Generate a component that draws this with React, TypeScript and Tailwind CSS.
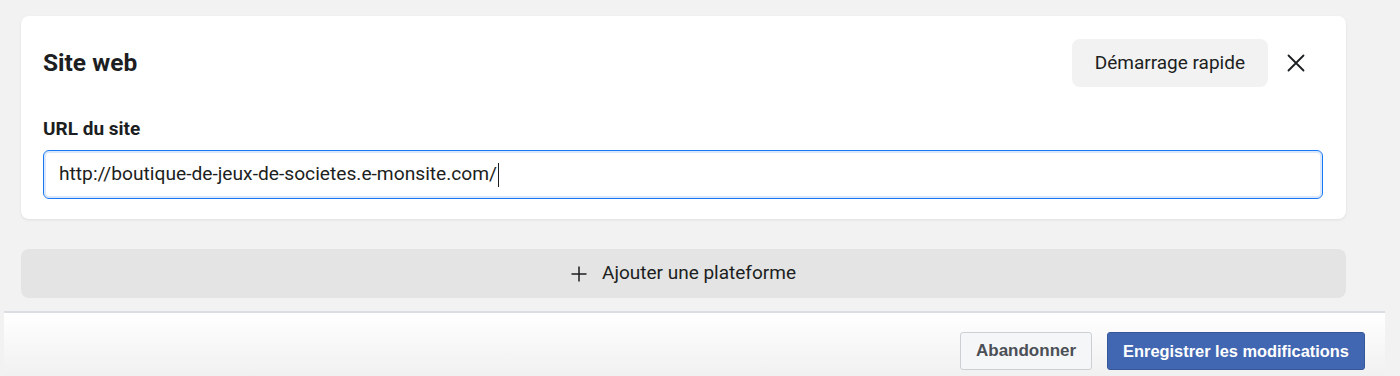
const App = () => {
  return (
    <div className="h-[376px] w-[1400px] overflow-hidden bg-[#f2f2f2] font-['Roboto',sans-serif] text-[#1c1e21]">
      <div className="pt-4">
        {/* Site web card */}
        <div className="ml-[21px] w-[1325px] rounded-lg bg-white pt-[23px] pb-[20px] pl-[22px] pr-[23px] shadow-[0_1px_3px_rgba(0,0,0,0.08)]">
          <div className="flex h-12 items-center justify-between">
            <h2 className="text-[24.5px] font-bold leading-none text-[#1c1e21]">Site web</h2>
            <div className="flex items-center">
              <button className="h-12 rounded-lg bg-[#f2f2f2] px-[23px] text-[19px] text-[#1c1e21]">
                Démarrage rapide
              </button>
              <button className="ml-2 mr-[7px] flex h-10 w-10 items-center justify-center text-[#1c1e21]">
                <svg width="18" height="18" viewBox="0 0 18 18" fill="none" stroke="currentColor" strokeWidth="1.8" strokeLinecap="round">
                  <path d="M1.5 1.5 L16.5 16.5 M16.5 1.5 L1.5 16.5" />
                </svg>
              </button>
            </div>
          </div>
          <label className="mt-[30px] block text-[19px] font-bold leading-[23px] text-[#1c1e21]">URL du site</label>
          <div className="mt-[10px] flex h-[49px] items-center rounded-md border border-[#1877f2] bg-white pl-[15px] shadow-[inset_0_0_0_2px_#dbe8fc]">
            <span className="text-[19.2px] text-[#1c1e21]">http://boutique-de-jeux-de-societes.e-monsite.com/</span>
            <span className="ml-[1px] h-[24px] w-px bg-[#1c1e21]"></span>
          </div>
        </div>

        {/* Add platform */}
        <button className="ml-[21px] mt-[30px] flex h-[49px] w-[1325px] items-center justify-center gap-[15px] rounded-lg bg-[#e4e4e4] text-[19px] text-[#1c1e21]">
          <svg width="16" height="16" viewBox="0 0 16 16" fill="none" stroke="currentColor" strokeWidth="1.5">
            <path d="M8 0.5 V15.5 M0.5 8 H15.5" />
          </svg>
          <span>Ajouter une plateforme</span>
        </button>

        {/* Footer */}
        <div className="ml-[4px] mt-[13px] h-[72px] w-[1381px] border-t-2 border-[#dadde1] bg-gradient-to-b from-white to-[#efefef] pt-[19px] pr-[20px] font-['Liberation_Sans',sans-serif]">
          <div className="flex justify-end gap-[15px]">
            <button className="h-[38px] rounded-[3px] border border-[#ccd0d5] bg-[#f5f6f7] px-[15px] text-[17px] font-bold text-[#4b4f56]">
              Abandonner
            </button>
            <button className="h-[38px] rounded-[3px] border border-[#365899] bg-[#4267b2] px-[15px] text-[16.4px] font-bold text-white">
              Enregistrer les modifications
            </button>
          </div>
        </div>
      </div>
    </div>
  );
};

export default App;
